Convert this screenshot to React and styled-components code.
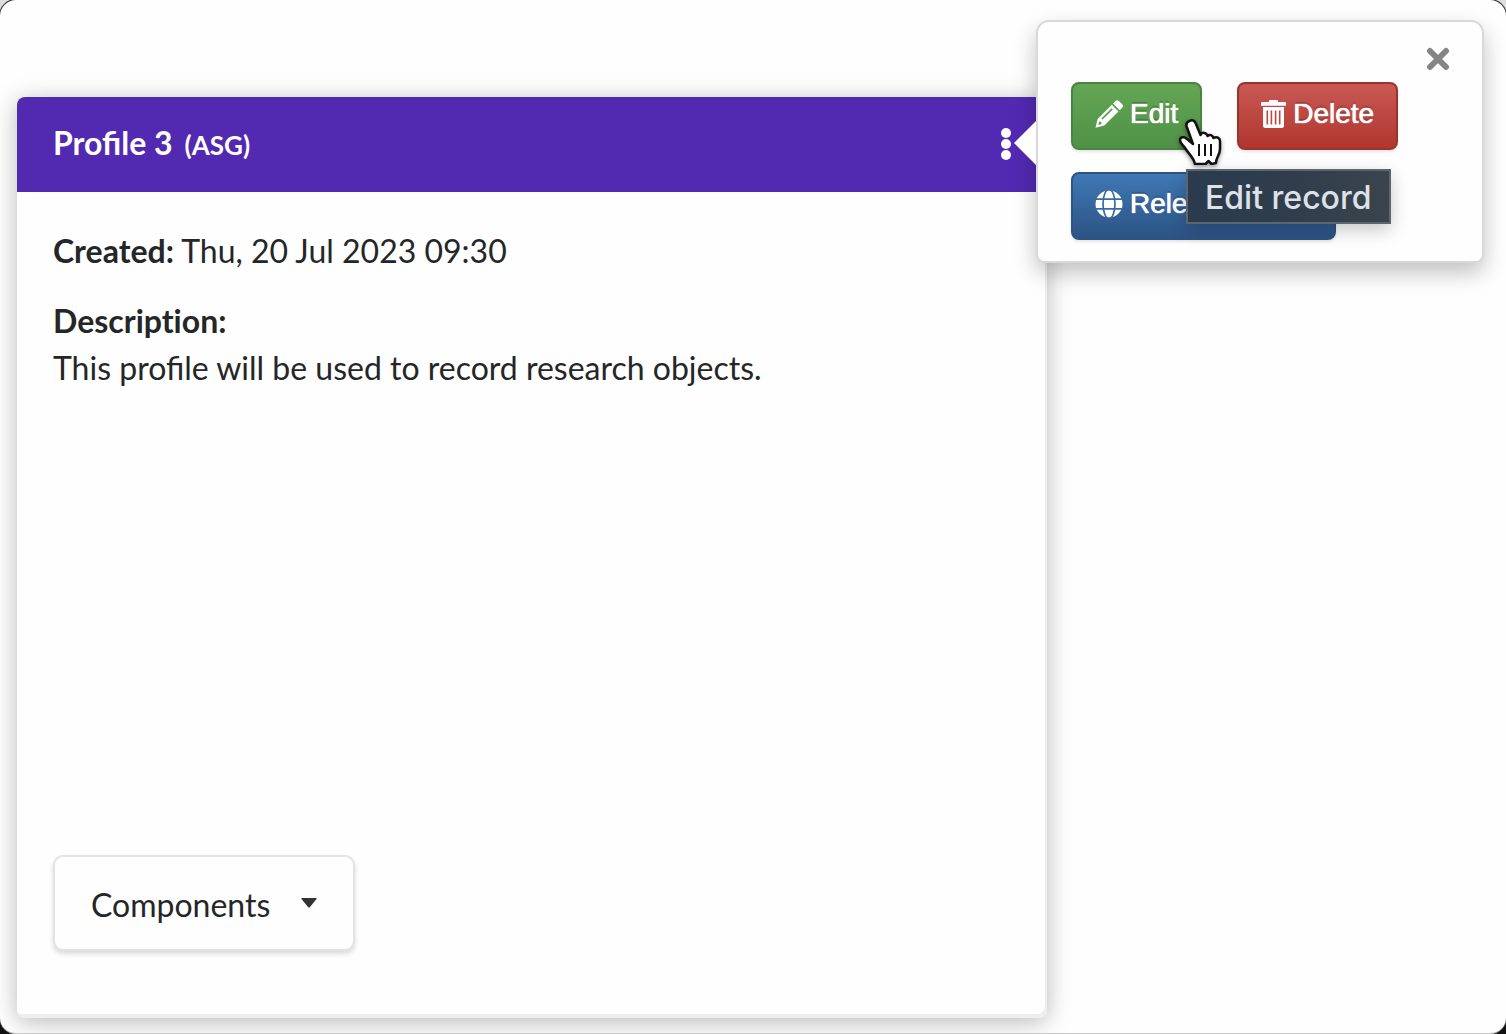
import React from "react";
import styled, { createGlobalStyle } from "styled-components";

const GlobalStyle = createGlobalStyle`
  *, *::before, *::after { box-sizing: border-box; }
  html { background: linear-gradient(#dedede 50%, #111 50%); }
  body {
    margin: 0;
    font-family: Lato, "Liberation Sans", sans-serif;
    font-size: 32px;
    line-height: 47px;
    color: #252627;
  }
  button, select { font: inherit; color: inherit; cursor: pointer; }
`;

const Page = styled.main`
  min-height: 100vh;
  display: grid;
  grid-template-columns: minmax(0, 1fr) 442px;
  padding: 97px 17px 15px;
  background: #fefefe;
  border-bottom: 1px solid #c8c8c8;
  border-radius: 16px;
  box-shadow: 0 0 0 1px #333;
  overflow: hidden;
`;

const Card = styled.article`
  display: flex;
  flex-direction: column;
  border-radius: 8px;
  background: #fefefe;
  box-shadow: inset -2px -4px 0 #eceeef, 0 4px 24px rgba(0, 0, 0, 0.28);
`;

const CardHeader = styled.header`
  position: relative;
  display: flex;
  align-items: center;
  justify-content: space-between;
  height: 95px;
  padding: 0 35px 1px 36px;
  border-radius: 8px 8px 0 0;
  background: #5229b1;
  color: #fff;
`;

const Title = styled.h1`
  display: flex;
  align-items: baseline;
  gap: 12px;
  margin: 0;
  font-size: 32px;
  line-height: 47px;
  font-weight: 700;
`;

const ProfileType = styled.small`
  font-size: 26px;
`;

const MenuButton = styled.button`
  display: flex;
  padding: 0;
  border: 0;
  background: none;
`;

const CardBody = styled.div`
  flex: 1;
  display: flex;
  flex-direction: column;
  align-items: flex-start;
  padding: 35px 36px 67px;
`;

const Text = styled.p`
  margin: 0 0 23px;
`;

const Term = styled.b`
  font-variant-ligatures: none;
`;

const SelectBox = styled.div`
  display: grid;
  align-items: center;
  width: 302px;
  margin-top: auto;
  > * { grid-area: 1 / 1; }
  > svg { justify-self: end; margin-right: 38px; pointer-events: none; }
`;

const Select = styled.select`
  appearance: none;
  width: 100%;
  height: 96px;
  padding: 2px 36px 0;
  border: 2px solid #e2e3e4;
  border-radius: 10px;
  background: #fefefe;
  box-shadow: 0 3px 5px rgba(0, 0, 0, 0.14);
`;

const Popover = styled.div`
  position: absolute;
  top: -77px;
  left: calc(100% - 11px);
  display: flex;
  flex-direction: column;
  width: 448px;
  padding: 25px 32px 21px 33px;
  border: 2px solid #d8d8d8;
  border-radius: 13px 13px 8px 8px;
  background: #fefefe;
  box-shadow: 0 10px 22px rgba(0, 0, 0, 0.24);
  color: #252627;

  &::before {
    content: "";
    position: absolute;
    top: 99px;
    left: -24px;
    border: solid transparent;
    border-width: 22px 22px 22px 0;
    border-right-color: #fefefe;
  }
`;

const CloseButton = styled.button`
  display: flex;
  align-self: flex-end;
  margin-bottom: 11px;
  padding: 0;
  border: 0;
  background: none;
`;

const Actions = styled.div`
  display: flex;
  flex-wrap: wrap;
  gap: 22px 35px;
`;

const ActionItem = styled.div`
  position: relative;
  z-index: ${(p) => (p.$raised ? 1 : 0)};
`;

const tones = {
  green: ["#64a655", "#4f9145", "#4b8245"],
  red: ["#c95853", "#b0362f", "#963530"],
  blue: ["#3f78b4", "#2c5385", "#2d5481"],
};

const ActionButton = styled.button`
  display: flex;
  align-items: center;
  gap: 7px;
  height: 68px;
  padding: 0 22px 4px;
  border: 2px solid ${(p) => tones[p.$tone][2]};
  border-radius: 8px;
  background: linear-gradient(${(p) => tones[p.$tone][0]}, ${(p) => tones[p.$tone][1]});
  box-shadow: 0 2px 3px rgba(0, 0, 0, 0.1);
  color: #fff;
  font-family: "Liberation Sans", Arial, sans-serif;
  font-size: 28px;
  line-height: 40px;
  text-shadow: 0 0 1px #fff, 0 0 1px #fff, 0 -2px 1px rgba(0, 0, 0, 0.2);
`;

const Tooltip = styled.div`
  position: absolute;
  top: 87px;
  left: 115px;
  padding: 6px 18px 3px 17px;
  border: 2px solid #5b666e;
  background: linear-gradient(90deg, #2b3b4d, #2f3d4c 50%, #3b444c);
  box-shadow: 0 6px 18px rgba(0, 0, 0, 0.22);
  color: #dde1e8;
  font-family: Inter, sans-serif;
  font-size: 32px;
  font-weight: 500;
  line-height: 42px;
  white-space: nowrap;
`;

const Pointer = styled.svg`
  position: absolute;
  z-index: 1;
  top: 35px;
  left: 106px;
  filter: drop-shadow(0 2px 2px rgba(0, 0, 0, 0.4));
  pointer-events: none;
`;

const PencilIcon = () => (
  <svg width="28" height="28" viewBox="0 0 28 28" fill="#fff" aria-hidden="true">
    <path d="M20.500 1a2.500 2.500 0 0 1 3.400 0l3.300 3.300a2.500 2.500 0 0 1 0 3.400L24.700 10.200 18 3.500zM16.800 4.700 23.500 11.400 9.300 25.500 0.500 27.800 2.600 19zM4.200 21.500 3.300 25l3.300-.9-.5-2zM16.600 8.200 6.400 18.400l1.200 1.200L17.800 9.400z" fillRule="evenodd" />
  </svg>
);

const TrashIcon = () => (
  <svg width="25" height="28" viewBox="0 0 25 28" fill="#fff" aria-hidden="true">
    <path d="M8 2V1q0-1 1-1h7q1 0 1 1v1h7q1 0 1 1v2.700H0V3q0-1 1-1zM2 7h21v18.500q0 2.500-2.500 2.500h-16Q2 28 2 25.500zM5.500 10.500v14h1.600v-14zM9.600 10.500v14h1.600v-14zM13.800 10.500v14h1.600v-14zM17.900 10.500v14h1.600v-14z" fillRule="evenodd" />
  </svg>
);

const GlobeIcon = () => (
  <svg width="28" height="28" viewBox="0 0 28 28" aria-hidden="true">
    <circle cx="14" cy="14" r="13.500" fill="#fff" />
    <g fill="none" stroke="#386ba4" strokeWidth="1.700">
      <path d="M0 9.200h28M0 18.800h28" />
      <ellipse cx="14" cy="14" rx="6" ry="14.500" />
    </g>
  </svg>
);

export default function App() {
  return (
    <>
      <GlobalStyle />
      <Page>
        <Card>
          <CardHeader>
            <Title>
              Profile 3 <ProfileType>(ASG)</ProfileType>
            </Title>
            <MenuButton type="button" aria-label="Profile actions">
              <svg width="12" height="32" viewBox="0 0 12 32" fill="#fff">
                <circle cx="6" cy="5" r="5" />
                <circle cx="6" cy="16" r="5" />
                <circle cx="6" cy="27" r="5" />
              </svg>
            </MenuButton>
            <Popover>
              <CloseButton type="button" aria-label="Close">
                <svg width="24" height="24" viewBox="0 0 24 24" stroke="#858585" strokeWidth="6" strokeLinecap="round">
                  <path d="M4 4l16 16M20 4L4 20" />
                </svg>
              </CloseButton>
              <Actions>
                <ActionItem $raised>
                  <ActionButton type="button" $tone="green" aria-describedby="edit-tip">
                    <PencilIcon />
                    Edit
                  </ActionButton>
                  <Tooltip id="edit-tip" role="tooltip">Edit record</Tooltip>
                  <Pointer width="46" height="48" viewBox="0 0 46 48" aria-hidden="true">
                    <path
                      d="M12.500 4c3-2 5.500 0 6.500 3l4.500 11c1-3 6-3 7 1 2-2 5-1 6 2 3-2 6.500 0 6.500 3v8c0 6-4 8-4 14l-4.500 1-3-3-3 3H18c-1-6-7-11-10-16-2-3-5-5-5-8 0-3 4-4 7-1l6 5L9.800 10c-1-3-.3-5 2.700-6z"
                      fill="#fff" stroke="#111" strokeWidth="2.500" strokeLinejoin="round"
                    />
                    <path d="M22 27v12M28 27v12M34 27v12" stroke="#111" strokeWidth="2" />
                  </Pointer>
                </ActionItem>
                <ActionItem>
                  <ActionButton type="button" $tone="red">
                    <TrashIcon />
                    Delete
                  </ActionButton>
                </ActionItem>
                <ActionItem>
                  <ActionButton type="button" $tone="blue">
                    <GlobeIcon />
                    Release Study
                  </ActionButton>
                </ActionItem>
              </Actions>
            </Popover>
          </CardHeader>
          <CardBody>
            <Text>
              <Term>Created:</Term> Thu, 20 Jul 2023 09:30
            </Text>
            <Text>
              <Term>Description:</Term>
              <br />
              This profile will be used to record research objects.
            </Text>
            <SelectBox>
              <Select aria-label="Components" defaultValue="components">
                <option value="components">Components</option>
              </Select>
              <svg width="16" height="10" viewBox="0 0 16 10" fill="#333" aria-hidden="true">
                <path d="M1 0h14q1 0 .5 1L9 9q-1 1-2 0L.5 1Q0 0 1 0z" />
              </svg>
            </SelectBox>
          </CardBody>
        </Card>
      </Page>
    </>
  );
}
